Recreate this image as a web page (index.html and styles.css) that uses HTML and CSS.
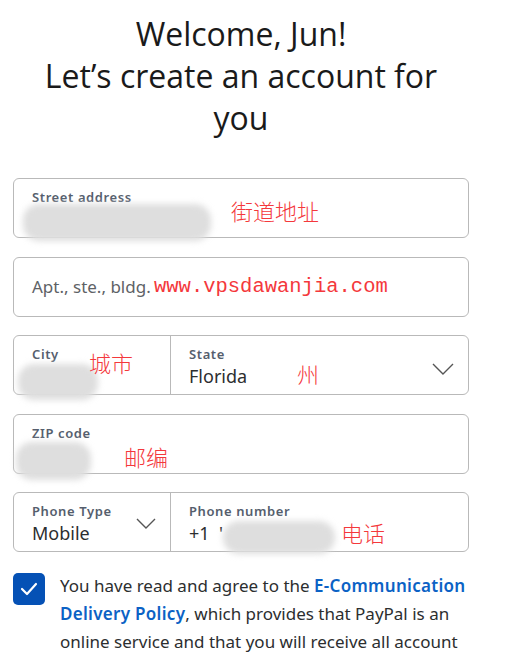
FILE: index.html
```html
<!DOCTYPE html>
<html lang="en">
<head>
  <meta charset="UTF-8">
  <title>Create account</title>
  <link rel="stylesheet" href="styles.css">
</head>
<body>
  <div class="shell">
    <h1 class="title">Welcome, Jun!<br>Let’s create an account for you</h1>

    <div class="field">
      <span class="label">Street address</span>
      <div class="blur" style="left:9px;top:25px;width:188px;height:37px;"></div>
      <span class="mark cjk" style="left:217px;top:20px;">街道地址</span>
    </div>

    <div class="field">
      <span class="placeholder">Apt., ste., bldg.</span>
      <span class="mark url" style="left:140px;top:19px;">www.vpsdawanjia.com</span>
    </div>

    <div class="field split">
      <div class="cell city">
        <span class="label">City</span>
      </div>
      <div class="cell grow">
        <span class="label">State</span>
        <span class="value">Florida</span>
        <svg class="chevron" width="22" height="12" viewBox="0 0 22 12"><polyline points="1,1 11,11 21,1" fill="none" stroke="#555" stroke-width="1.4"/></svg>
      </div>
      <div class="blur" style="left:4px;top:28px;width:80px;height:36px;"></div>
      <span class="mark cjk" style="left:75px;top:15px;">城市</span>
      <span class="mark cjk" style="left:283px;top:26px;">州</span>
    </div>

    <div class="field">
      <span class="label">ZIP code</span>
      <div class="blur" style="left:2px;top:27px;width:75px;height:38px;"></div>
      <span class="mark cjk" style="left:110px;top:30px;">邮编</span>
    </div>

    <div class="field split">
      <div class="cell city">
        <span class="label">Phone Type</span>
        <span class="value">Mobile</span>
        <svg class="chevron small" width="20" height="11" viewBox="0 0 20 11"><polyline points="1,1 10,10 19,1" fill="none" stroke="#555" stroke-width="1.4"/></svg>
      </div>
      <div class="cell grow">
        <span class="label">Phone number</span>
        <span class="value">+1 &nbsp;'</span>
      </div>
      <div class="blur" style="left:209px;top:28px;width:112px;height:33px;"></div>
      <span class="mark cjk" style="left:327px;top:28px;">电话</span>
    </div>

    <div class="agree">
      <div class="checkbox">
        <svg width="18" height="14" viewBox="0 0 18 14"><polyline points="2,7 7,12 16,2" fill="none" stroke="#fff" stroke-width="2.2" stroke-linecap="round" stroke-linejoin="round"/></svg>
      </div>
      <p class="agree-text">You have read and agree to the <a href="#">E-Communication</a> <a href="#">Delivery Policy</a><span>, which provides that PayPal is an</span> <span>online service and that you will receive all account</span></p>
    </div>
  </div>
</body>
</html>
```

FILE: styles.css
```css
body {
  margin: 0;
  background-color: #fff;
  font-family: "Noto Sans", "Open Sans", sans-serif;
  color: #2c2e2f;
}
.shell {
  width: 456px;
  margin-left: 13px;
  padding-top: 13px;
}
.title {
  margin: 0 0 39px;
  font-family: "Open Sans", sans-serif;
  font-weight: 400;
  font-size: 32px;
  line-height: 42px;
  text-align: center;
  color: #1a1a1a;
  padding: 0 20px;
}
.field {
  position: relative;
  box-sizing: border-box;
  height: 60px;
  margin-bottom: 18.5px;
  border: 1px solid #b9b9b9;
  border-radius: 6px;
  padding: 10px 18px 0;
}
.field.split {
  display: flex;
  padding: 0;
}
.cell {
  position: relative;
  padding: 10px 18px 0;
}
.cell.city {
  width: 157px;
  flex: none;
  box-sizing: border-box;
  border-right: 1px solid #b9b9b9;
}
.cell.grow {
  flex: 1;
}
.label {
  display: block;
  font-size: 13px;
  font-weight: 600;
  letter-spacing: 0.6px;
  color: #555e6d;
  line-height: 17px;
}
.value {
  display: block;
  font-size: 18px;
  line-height: 26px;
  color: #2c2e2f;
}
.placeholder {
  display: block;
  font-size: 17px;
  line-height: 38px;
  color: #5e6266;
}
.chevron {
  position: absolute;
  right: 14px;
  top: 27px;
}
.chevron.small {
  right: 14px;
  top: 25px;
}
.blur {
  position: absolute;
  background-color: #dedede;
  border-radius: 16px;
  filter: blur(3px);
}
.mark {
  position: absolute;
  color: #f4383c;
  line-height: 1;
  white-space: nowrap;
}
.mark.cjk {
  font-family: "Noto Sans CJK SC", sans-serif;
  font-weight: 300;
  font-size: 22px;
}
.mark.url {
  font-family: "Liberation Mono", monospace;
  font-size: 20.5px;
}
.agree {
  display: flex;
  gap: 15px;
  margin-top: 21px;
}
.checkbox {
  flex: none;
  width: 32px;
  height: 32px;
  border-radius: 5px;
  background-color: #0551b5;
  display: flex;
  align-items: center;
  justify-content: center;
}
.agree-text {
  margin: -1px 0 0;
  font-size: 17px;
  line-height: 28px;
  color: #2c2e2f;
}
.agree-text a {
  display: inline-block;
  color: #0b62c5;
  font-weight: 600;
  text-decoration: none;
  letter-spacing: 0.3px;
}
```
